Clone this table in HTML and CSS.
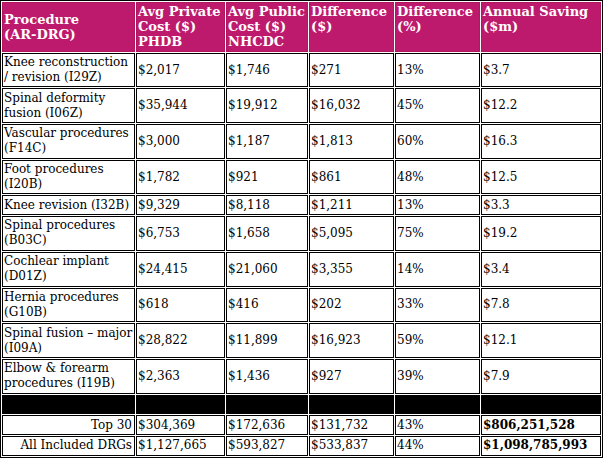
FILE: index.html
```html
<!DOCTYPE html>
<html>
<head>
<meta charset="utf-8">
<link rel="stylesheet" href="styles.css">
</head>
<body>
<table class="drg">
  <thead>
    <tr>
      <th class="w1 mid">Procedure<br>(AR-DRG)</th>
      <th class="w2">Avg Private<br>Cost ($)<br>PHDB</th>
      <th class="w3">Avg Public<br>Cost ($)<br>NHCDC</th>
      <th class="w4">Difference<br>($)</th>
      <th class="w5">Difference<br>(%)</th>
      <th class="w6">Annual Saving<br>($m)</th>
    </tr>
  </thead>
  <tbody>
    <tr><td class="name">Knee reconstruction<br>/ revision (I29Z)</td><td>$2,017</td><td>$1,746</td><td>$271</td><td>13%</td><td>$3.7</td></tr>
    <tr><td class="name">Spinal deformity<br>fusion (I06Z)</td><td>$35,944</td><td>$19,912</td><td>$16,032</td><td>45%</td><td>$12.2</td></tr>
    <tr><td class="name">Vascular procedures<br>(F14C)</td><td>$3,000</td><td>$1,187</td><td>$1,813</td><td>60%</td><td>$16.3</td></tr>
    <tr><td class="name">Foot procedures<br>(I20B)</td><td>$1,782</td><td>$921</td><td>$861</td><td>48%</td><td>$12.5</td></tr>
    <tr><td class="name">Knee revision (I32B)</td><td>$9,329</td><td>$8,118</td><td>$1,211</td><td>13%</td><td>$3.3</td></tr>
    <tr><td class="name">Spinal procedures<br>(B03C)</td><td>$6,753</td><td>$1,658</td><td>$5,095</td><td>75%</td><td>$19.2</td></tr>
    <tr><td class="name">Cochlear implant<br>(D01Z)</td><td>$24,415</td><td>$21,060</td><td>$3,355</td><td>14%</td><td>$3.4</td></tr>
    <tr><td class="name">Hernia procedures<br>(G10B)</td><td>$618</td><td>$416</td><td>$202</td><td>33%</td><td>$7.8</td></tr>
    <tr><td class="name">Spinal fusion – major<br>(I09A)</td><td>$28,822</td><td>$11,899</td><td>$16,923</td><td>59%</td><td>$12.1</td></tr>
    <tr><td class="name">Elbow &amp; forearm<br>procedures (I19B)</td><td>$2,363</td><td>$1,436</td><td>$927</td><td>39%</td><td>$7.9</td></tr>
    <tr class="sep"><td>&nbsp;</td><td>&nbsp;</td><td>&nbsp;</td><td>&nbsp;</td><td>&nbsp;</td><td>&nbsp;</td></tr>
    <tr><td class="name total">Top 30</td><td>$304,369</td><td>$172,636</td><td>$131,732</td><td>43%</td><td class="strong">$806,251,528</td></tr>
    <tr><td class="name total">All Included DRGs</td><td>$1,127,665</td><td>$593,827</td><td>$533,837</td><td>44%</td><td class="strong">$1,098,785,993</td></tr>
  </tbody>
</table>
</body>
</html>
```

FILE: styles.css
```css
html, body {
  margin: 0;
  padding: 0;
  background: #fff;
}

.drg {
  width: 603px;
  table-layout: fixed;
  border-collapse: separate;
  border-spacing: 1px;
  border: 1px solid #000;
  font-family: "DejaVu Serif", "Liberation Serif", serif;
  font-size: 12px;
  line-height: 15px;
  color: #000;
}

.drg th,
.drg td {
  box-sizing: border-box;
  padding: 1.35px 1px;
  white-space: nowrap;
  overflow: hidden;
  text-align: left;
}

.drg th {
  background: #bd1a6d;
  color: #fff;
  font-weight: bold;
  font-size: 13px;
  vertical-align: top;
  border: 1px solid #b0175f;
}

.drg th.mid {
  vertical-align: middle;
}

.drg td {
  border: 1px solid #000;
  vertical-align: middle;
}

.w1 { width: 133px; }
.w2 { width: 89px; }
.w3 { width: 82px; }
.w4 { width: 85px; }
.w5 { width: 85px; }
.w6 { width: 120px; }

.drg td.total {
  text-align: right;
  padding-right: 2px;
}

.drg td.strong {
  font-weight: bold;
}

.drg tr.sep td {
  background: #000;
}
```
